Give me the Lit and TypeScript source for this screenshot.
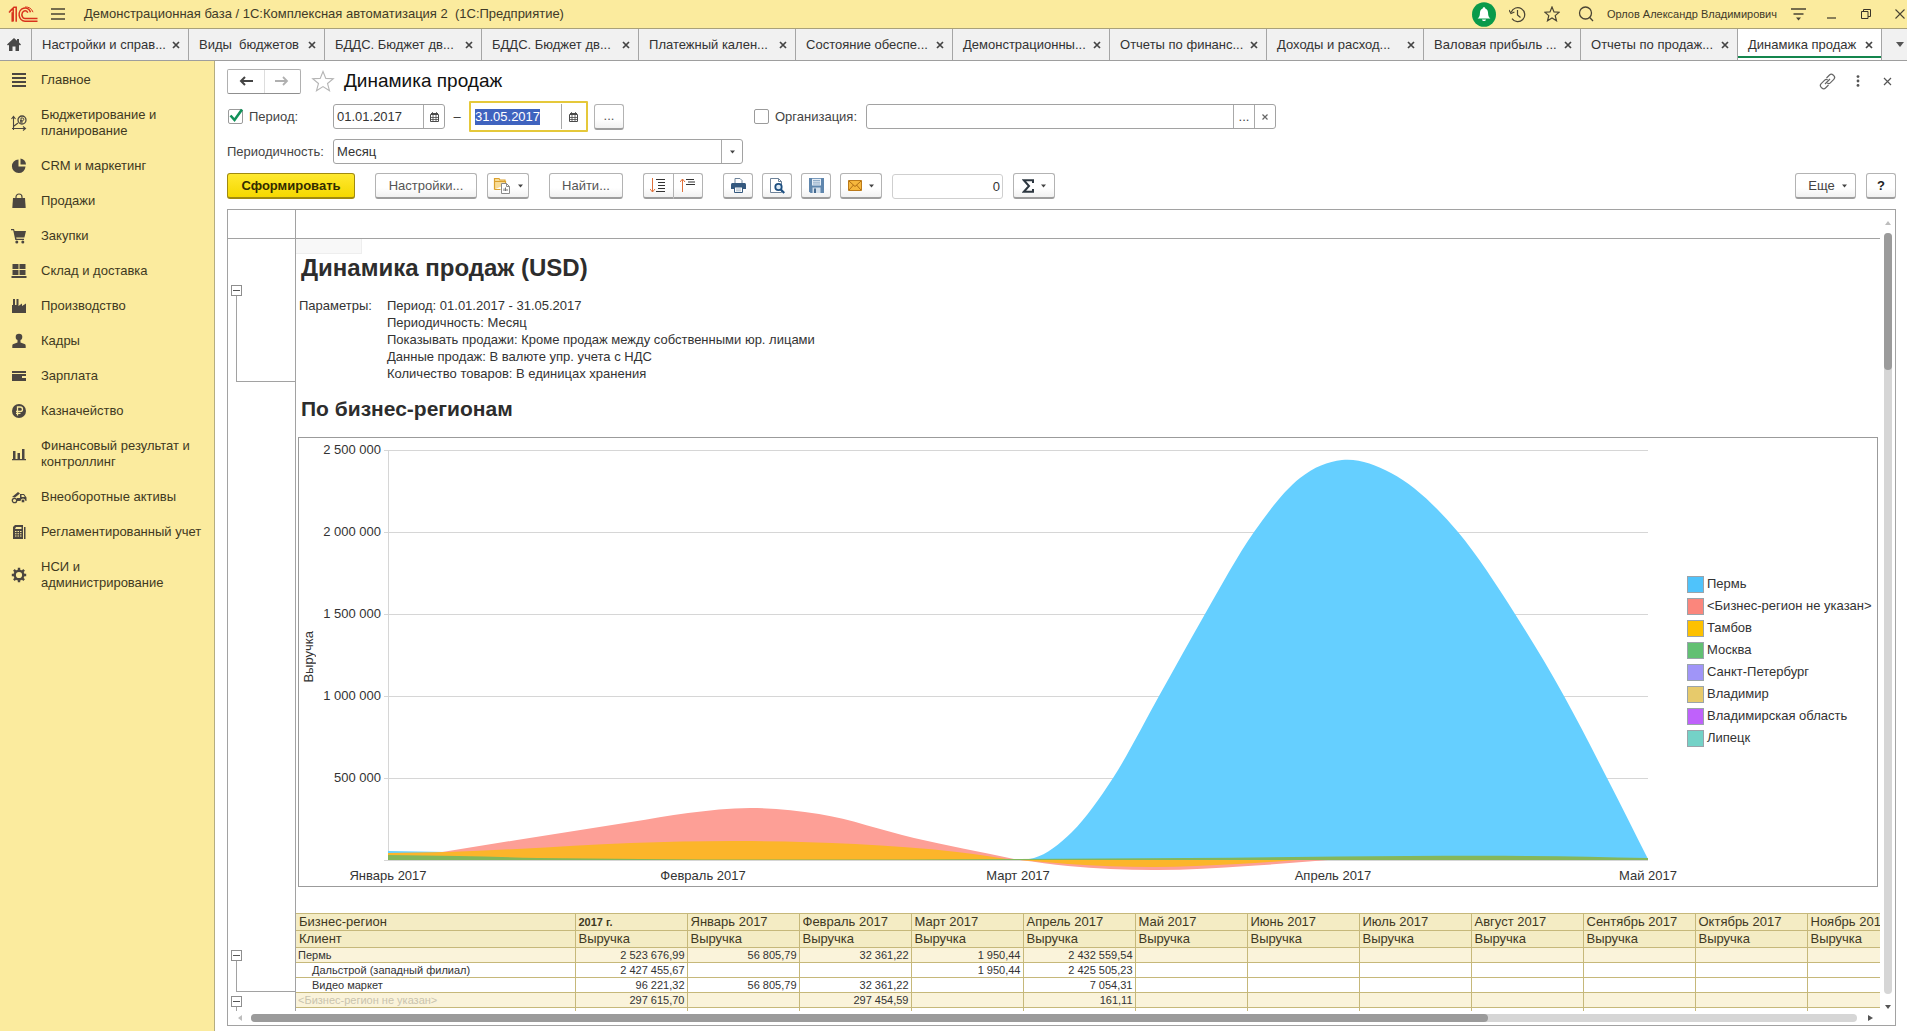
import { LitElement, html, css, svg, nothing, type TemplateResult } from "lit";
import { customElement, query, state } from "lit/decorators.js";
import { classMap } from "lit/directives/class-map.js";

const icons: Record<string, TemplateResult> = {
  logo: html`<svg width="30" height="17" viewBox="0 0 30 17" fill="none" stroke="#d8321c" stroke-width="1.5">
    <path d="M1 6.5 5.2 2.2v13.3M4.2 6.2v9.6M8.2 15.8V1.2H6L2 5" />
    <path d="M22.5 6.2A5.9 6.6 0 1 0 17 15.2H29.5" />
    <path d="M19.8 6.6A3.2 3.9 0 1 0 17 12.6H29.5" />
    <path d="M25 6.2A8 8 0 0 0 17 1" stroke-width="1" />
  </svg>`,
  burger: html`<svg width="14" height="14" viewBox="0 0 14 14" stroke="#4a4433" stroke-width="1.4"><path d="M0 2h14M0 7h14M0 12h14" /></svg>`,
  bell: html`<svg width="24" height="25" viewBox="0 0 24 25"><ellipse cx="12" cy="12.5" rx="12" ry="12.3" fill="#0a9a4a" /><path d="M12 5.2c.9 0 1.2.6 1.3 1.2 2 .7 2.7 2.500 2.800 5 .1 2.400.5 3.500 2.300 5H5.600c1.800-1.500 2.200-2.600 2.300-5 .1-2.500.8-4.300 2.800-5 .1-.6.400-1.200 1.300-1.200zM10 17.400h4c-.2 1-1 1.600-2 1.600s-1.800-.6-2-1.600z" fill="#fff" /></svg>`,
  history: html`<svg width="17" height="17" viewBox="0 0 17 17" fill="none" stroke="#4a4433" stroke-width="1.2"><path d="M2.200 6.200A7 7 0 1 1 3 12.700" /><path d="M8.500 4v5l3 2.500" /><path d="M0 4l2 3.500L5.400 6" /></svg>`,
  star: html`<svg width="16" height="16" viewBox="0 0 16 16" fill="none" stroke="#4a4433" stroke-width="1.2"><path d="M8 1l2 4.900 5.200.3-4 3.400 1.300 5.200L8 12l-4.500 2.800 1.300-5.200-4-3.400 5.200-.3z" /></svg>`,
  starBig: html`<svg width="24" height="22" viewBox="0 0 24 22" fill="none" stroke="#b5b5b5" stroke-width="1.100"><path d="M12 1.500l2.800 6.900 7.500.4-5.800 4.700 2 7.200L12 16.600l-6.500 4.100 2-7.200-5.800-4.700 7.500-.4z" /></svg>`,
  search: html`<svg width="16" height="16" viewBox="0 0 16 16" fill="none" stroke="#4a4433" stroke-width="1.300"><circle cx="7.500" cy="7" r="6" /><path d="M11.500 11.300l3.500 3.700" /></svg>`,
  settings: html`<svg width="15" height="14" viewBox="0 0 15 14" fill="none" stroke="#4a4433" stroke-width="1.300"><path d="M0 2h15M2.500 7h10" /><path d="M5 10.500h5l-2.500 3z" fill="#4a4433" stroke="none" /></svg>`,
  minimize: html`<svg width="10" height="12" viewBox="0 0 10 12" stroke="#4a4433" stroke-width="1.300"><path d="M0 10h9" /></svg>`,
  restore: html`<svg width="10" height="10" viewBox="0 0 10 10" fill="none" stroke="#3a3529"><path d="M.500 2.500h6.500v7H.500zM2.500 2.500v-2h7v7H7" /></svg>`,
  closeThin: html`<svg width="10" height="10" viewBox="0 0 10 10" stroke="#4a4433" stroke-width="1.100"><path d="M.500.500l9 9M9.500.500l-9 9" /></svg>`,
  closeForm: html`<svg width="9" height="9" viewBox="0 0 9 9" stroke="#555" stroke-width="1.200"><path d="M1 1l7 7M8 1L1 8" /></svg>`,
  closeTab: html`<svg width="8" height="8" viewBox="0 0 8 8" stroke="#444" stroke-width="1.700"><path d="M1 1l6 6M7 1L1 7" /></svg>`,
  clear: html`<svg width="6" height="6" viewBox="0 0 6 6" stroke="#666" stroke-width="1.200"><path d="M.500.500l5 5M5.500.500l-5 5" /></svg>`,
  home: html`<svg width="14" height="13" viewBox="0 0 14 13" fill="#484848"><path d="M7 0l3 2.700V1h2v3.600L14 6.500l-1 1-1-.8V13H8.500V8.500h-3V13H2V6.700l-1 .8-1-1z" /></svg>`,
  caret: html`<svg width="5" height="4" viewBox="0 0 5 4" fill="#444"><path d="M0 .500h5L2.500 3.500z" /></svg>`,
  caretBig: html`<svg width="8" height="5" viewBox="0 0 8 5" fill="#555"><path d="M0 0h8L4 5z" /></svg>`,
  back: html`<svg width="14" height="10" viewBox="0 0 14 10" fill="none" stroke="#444" stroke-width="2"><path d="M14 5H2M6 1L2 5l4 4" /></svg>`,
  forward: html`<svg width="14" height="10" viewBox="0 0 14 10" fill="none" stroke="#b0b0b0" stroke-width="1.800"><path d="M0 5h12M8 1l4 4-4 4" /></svg>`,
  link: html`<svg width="17" height="17" viewBox="0 0 17 17" fill="none" stroke="#666" stroke-width="1.200"><path d="M7.500 5l3-3c1-1 2.600-1 3.600 0l.7.700c1 1 1 2.600 0 3.600l-3.500 3.500c-.8.800-2 .9-3 .3M9.500 12l-3 3c-1 1-2.600 1-3.600 0l-.7-.7c-1-1-1-2.600 0-3.600l3.500-3.500c.8-.8 2-.9 3-.3" /><path d="M6 11l5-5" /></svg>`,
  dots: html`<svg width="4" height="12" viewBox="0 0 4 12" fill="#555"><circle cx="2" cy="1.600" r="1.400" /><circle cx="2" cy="6" r="1.400" /><circle cx="2" cy="10.400" r="1.400" /></svg>`,
  calendar: html`<svg width="9" height="10" viewBox="0 0 9 10" fill="none" stroke="#4a4a4a"><path d="M.500 2.500h8v7h-8z" /><path d="M1 2h7" stroke-width="2" /><path d="M2.500 0v2M6.500 0v2M3 3v7M6 3v7M1 5.500h7M1 7.500h7" stroke-width=".8" /></svg>`,
  variants: html`<svg width="18" height="18" viewBox="0 0 18 18" fill="none"><path d="M1.500 4.500V1.500H6l1 1.500h5v2M1.500 12.500v-8h11v3M1.500 12.500h6" fill="#f8dc97" stroke="#dba12e" stroke-width="1.200" /><path d="M8.500 6.500h5l3 3v7h-8z" fill="#fff" stroke="#8b8b8b" /><path d="M13.500 6.500v3h3" stroke="#8b8b8b" /><path d="M11 14v-2.500M12.500 14v-3.500M14 14v-2" stroke="#777" /></svg>`,
  expand: html`<svg width="17" height="15" viewBox="0 0 17 15" fill="none"><path d="M2.500 0v14M0 11l2.500 3L5 11" stroke="#e0703a" stroke-width="1" /><path d="M6 1.500h9M8 4.500h7M8 7.500h7M8 10.500h7M6 13.500h9" stroke="#333" stroke-width="1.200" /></svg>`,
  collapse: html`<svg width="17" height="15" viewBox="0 0 17 15" fill="none"><path d="M2.500 14V1M0 4l2.500-3L5 4" stroke="#e0703a" stroke-width="1" /><path d="M6 1.500h8M8 4h7M6 6.500h9" stroke="#333" stroke-width="1.200" /></svg>`,
  print: html`<svg width="15" height="15" viewBox="0 0 15 15"><path d="M4 6V.500h5L11 2.500V6" fill="#fff" stroke="#6d8299" /><path d="M1.500 5h12c.8 0 1.500.700 1.500 1.500V11H0V6.500C0 5.700.700 5 1.500 5z" fill="#35597f" /><path d="M3.500 9h8v5.500h-8z" fill="#fff" stroke="#35597f" /><path d="M5 11h5M5 12.800h5" stroke="#8ea3b8" stroke-width=".8" /></svg>`,
  preview: html`<svg width="15" height="16" viewBox="0 0 15 16" fill="none"><path d="M.500.500h8l3 3v11H.500z" fill="#fff" stroke="#6d8299" /><path d="M8.500.500v3h3" stroke="#6d8299" /><circle cx="8.500" cy="9" r="3.200" fill="#dbe9f5" stroke="#1d4f80" stroke-width="1.800" /><path d="M10.800 11.400l3.400 3.600" stroke="#1d4f80" stroke-width="2.200" /></svg>`,
  save: html`<svg width="15" height="15" viewBox="0 0 15 15"><path d="M0 0h15v15H1.500L0 13.500z" fill="#5f86ad" /><path d="M3 .8h9v6.700H3z" fill="#e6eef6" /><path d="M4 2.500h7M4 4.200h7M4 6h7" stroke="#7a9abb" stroke-width=".8" /><path d="M3.500 9.500h8V15h-8z" fill="#d3dfeb" /><path d="M5 10.500h2V15H5z" fill="#456a90" /></svg>`,
  mail: html`<svg width="14" height="11" viewBox="0 0 14 11"><path d="M.500.500h13v10H.500z" fill="#f6b73c" stroke="#bb7a1a" /><path d="M1 1l6 5.500L13 1M1 10l4.500-5M13 10L8.500 5" fill="none" stroke="#a5630f" stroke-width=".9" /></svg>`,
  sigma: html`<svg width="12" height="14" viewBox="0 0 12 14" fill="none" stroke="#2d3740" stroke-width="2"><path d="M11 4V1.200H1.800L7 7l-5.200 5.800H11V10" /></svg>`,
};

const navIcon = (body: TemplateResult) =>
  html`<svg class="nav-icon" width="16" height="16" viewBox="0 0 16 16" fill="#4b4640">${body}</svg>`;

const sections: { label: string; icon: TemplateResult }[] = [
  { label: "Главное", icon: svg`<path d="M1 1h14v2H1zM1 5h14v2H1zM1 9h14v2H1zM1 13h14v2H1z"/>` },
  {
    label: "Бюджетирование и\nпланирование",
    icon: svg`<path d="M2.500 15V2M.500 4l2-2.500L4.500 4M1 13.500h13M12 11.500l2.500 2-2.500 2M3 11l4-3" fill="none" stroke="#4b4640" stroke-width="1.100"/><circle cx="11" cy="5" r="4" fill="none" stroke="#4b4640" stroke-width="1.300"/><path d="M10 8V3h1.500a1.300 1.300 0 0 1 0 2.600H9M9 6.900h3" fill="none" stroke="#4b4640" stroke-width="1"/>`,
  },
  { label: "CRM и маркетинг", icon: svg`<path d="M7.500 1.500v7h7A6.800 6.800 0 1 1 7.500 1.500z"/><path d="M9.500.500A6.500 6.500 0 0 1 15 6.500H9.500z"/>` },
  { label: "Продажи", icon: svg`<path d="M2 5h12l.700 10H1.300z"/><path d="M5 7V4a3 3 0 0 1 6 0v3" fill="none" stroke="#4b4640" stroke-width="1.200"/>` },
  { label: "Закупки", icon: svg`<path d="M0 1h3l.600 2H15l-1.600 6.500H5.200l.3 1.300H13v1.200H4.300L2.200 2.300H0z"/><circle cx="5.800" cy="14" r="1.500"/><circle cx="11.800" cy="14" r="1.500"/>` },
  { label: "Склад и доставка", icon: svg`<path d="M1.500 1h6v5h-6zM8.500 1h6v5h-6zM1.500 7h6v5h-6zM8.500 7h6v5h-6zM.500 13h15v2H.500z"/>` },
  { label: "Производство", icon: svg`<path d="M1 15V7h1V1h2v6h1.500V1h2v7L11 5.500V8l4-2.500V15z"/>` },
  { label: "Кадры", icon: svg`<circle cx="8" cy="4" r="3.300"/><path d="M6.500 7h3v2.500l4 1.500c1 .4 1.200 1.200 1.200 2.200V15H1.300v-1.800c0-1 .2-1.800 1.200-2.200l4-1.500z"/>` },
  { label: "Зарплата", icon: svg`<path d="M1 3h14v2H1zM1 6h14v2h-4v2h4v3H1z"/>` },
  { label: "Казначейство", icon: svg`<circle cx="8" cy="8" r="7"/><path d="M6.500 12.500V4h2.800a2.200 2.200 0 0 1 0 4.400H5M5 10.400h4.500" fill="none" stroke="#fbeb9e" stroke-width="1.300"/>` },
  { label: "Финансовый результат и\nконтроллинг", icon: svg`<path d="M2 5h2.500v8H2zM6.500 7H9v6H6.500zM11 3h2.500v10H11zM1 13h14v1.200H1z"/>` },
  { label: "Внеоборотные активы", icon: svg`<path d="M1 8l6-5 2 1.500L4 8.500zM9 5h4l2.500 3.500V12H6V9h3z"/><circle cx="3.500" cy="11.500" r="2.200" fill="none" stroke="#4b4640" stroke-width="1.300"/><circle cx="12" cy="12" r="2" stroke="#fbeb9e"/><path d="M10.500 6h2l1.300 2h-3.300z" fill="#fbeb9e"/>` },
  { label: "Регламентированный учет", icon: svg`<path d="M2 3l2-2h8v14H2zM13 3h1.500v12H13z"/><path d="M5 3h5.500v2H4z" fill="#fbeb9e"/><path d="M4 7.500h7M4 9.800h7M4 12h7" stroke="#fbeb9e" stroke-width="1.100" stroke-dasharray="1.500 1"/>` },
  { label: "НСИ и\nадминистрирование", icon: svg`<circle cx="8" cy="8" r="4.300" fill="none" stroke="#4b4640" stroke-width="2.400"/><path d="M8 .800v3M8 12.200v3M.800 8h3M12.200 8h3M2.900 2.900L5 5M11 11l2.100 2.100M2.900 13.100L5 11M11 5l2.100-2.100" stroke="#4b4640" stroke-width="2.400"/>` },
];

const tabs = [
  "Настройки и справ...",
  "Виды  бюджетов",
  "БДДС. Бюджет дв...",
  "БДДС. Бюджет дв...",
  "Платежный кален...",
  "Состояние обеспе...",
  "Демонстрационны...",
  "Отчеты по финанс...",
  "Доходы и расход...",
  "Валовая прибыль ...",
  "Отчеты по продаж...",
  "Динамика продаж",
];
const compactTabs = new Set(["Виды  бюджетов", "Динамика продаж"]);

const legend = [
  ["Пермь", "perm"],
  ["<Бизнес-регион не указан>", "none"],
  ["Тамбов", "tambov"],
  ["Москва", "moscow"],
  ["Санкт-Петербург", "spb"],
  ["Владимир", "vladimir"],
  ["Владимирская область", "vladobl"],
  ["Липецк", "lipetsk"],
];

const months = ["Январь 2017", "Февраль 2017", "Март 2017", "Апрель 2017", "Май 2017", "Июнь 2017", "Июль 2017", "Август 2017", "Сентябрь 2017", "Октябрь 2017", "Ноябрь 2017"];

type Row = { name: string; kind: "group" | "child" | "muted"; values: string[] };
const rows: Row[] = [
  { name: "Пермь", kind: "group", values: ["2 523 676,99", "56 805,79", "32 361,22", "1 950,44", "2 432 559,54"] },
  { name: "Дальстрой (западный филиал)", kind: "child", values: ["2 427 455,67", "", "", "1 950,44", "2 425 505,23"] },
  { name: "Видео маркет", kind: "child", values: ["96 221,32", "56 805,79", "32 361,22", "", "7 054,31"] },
  { name: "<Бизнес-регион не указан>", kind: "muted", values: ["297 615,70", "", "297 454,59", "", "161,11"] },
  { name: "", kind: "child", values: [] },
];

type Point = [number, number];

/* Smooth curve y(x) through all points: cubic Hermite segments with
   distance-weighted slopes, written as Bezier commands. */
function curve(points: Point[]): string {
  const n = points.length;
  const steps = points.slice(1).map((p, i) => ({ h: p[0] - points[i][0], s: (p[1] - points[i][1]) / (p[0] - points[i][0]) }));
  const slope = (i: number) => {
    if (i === 0) return steps[0].s;
    if (i === n - 1) return steps[n - 2].s;
    const a = steps[i - 1];
    const b = steps[i];
    return (a.s * b.h + b.s * a.h) / (a.h + b.h);
  };
  let d = `M${points[0][0]} ${points[0][1]}`;
  for (let i = 0; i < n - 1; i++) {
    const [x1, y1] = points[i];
    const [x2, y2] = points[i + 1];
    const t = (x2 - x1) / 3;
    const c = [x1 + t, y1 + slope(i) * t, x2 - t, y2 - slope(i + 1) * t, x2, y2].map((v) => v.toFixed(1));
    d += `C${c.join(" ")}`;
  }
  return d;
}
const area = (points: Point[]) => `${curve(points)}L${points[points.length - 1][0]} 410L${points[0][0]} 410Z`;

const series: { cls: string; points: Point[] }[] = [
  { cls: "perm", points: [[0, 401], [60, 402], [160, 404], [320, 406], [630, 410]] },
  { cls: "perm", points: [[632, 410], [646, 408], [684, 382], [725, 328], [771, 246], [817, 164], [866, 82], [912, 28], [954, 10], [1003, 23], [1070, 82], [1127, 164], [1176, 246], [1219, 328], [1260, 409]] },
  { cls: "none", points: [[42, 404], [129, 390], [243, 372], [300, 363], [362, 358], [431, 364], [526, 388], [626, 409]] },
  { cls: "tambov", points: [[0, 403], [60, 402], [129, 399], [243, 393], [350, 391], [467, 394], [569, 402], [626, 410]] },
  { cls: "none", points: [[632, 410], [680, 416], [765, 420], [860, 416], [940, 410]] },
  { cls: "tambov", points: [[632, 410], [680, 414], [765, 417], [850, 414], [910, 410]] },
  { cls: "moscow", points: [[0, 405], [70, 406], [150, 408], [252, 409], [630, 409], [800, 408], [1020, 406], [1140, 406], [1260, 408]] },
];

const base = css`
  * { box-sizing: border-box; }
  button, input, select { font: inherit; color: inherit; margin: 0; padding: 0; background: none; border: 0; border-radius: 0; min-width: 0; outline: none; }
  button { display: inline-flex; align-items: center; justify-content: center; cursor: pointer; }
  svg { display: block; flex: none; }
  h1, h2, h3, p, ul, dl, dt, dd { margin: 0; padding: 0; }
`;

@customElement("report-chart")
export class ReportChart extends LitElement {
  static styles = [base, css`
    :host { display: block; }
    .chart { display: grid; grid-template-columns: 20px 62px 1fr 190px; border: 1px solid #9b9b9b; padding-top: 12px; font-size: 13px; line-height: 16px; color: #333; }
    .axis-name { align-self: center; justify-self: center; writing-mode: vertical-rl; transform: rotate(180deg); margin-bottom: 22px; }
    .scale { display: flex; flex-direction: column; justify-content: space-between; text-align: right; height: 410px; }
    .scale span { height: 0; display: flex; align-items: center; justify-content: flex-end; white-space: nowrap; }
    .plot { margin: 0 39px 0 7px; min-width: 0; }
    .canvas { width: 100%; height: 410px; overflow: visible; }
    .months { display: flex; justify-content: space-between; margin-top: 8px; height: 18px; }
    .months span { width: 0; display: flex; justify-content: center; white-space: nowrap; }
    .legend { list-style: none; align-self: center; margin-bottom: 14px; }
    .legend li { display: flex; align-items: center; gap: 3px; height: 22px; white-space: nowrap; }
    .swatch { width: 17px; height: 17px; border: 1px solid #9aa4aa; flex: none; }
    .grid { stroke: #d6d6d6; vector-effect: non-scaling-stroke; shape-rendering: crispEdges; }
    .perm { background: #4fc3fb; fill: #65cfff; }
    .none { background: #fb867c; fill: #fd9f96; }
    .tambov { background: #fdc100; fill: #fcb52a; }
    .moscow { background: #62c073; fill: #84b75c; }
    .spb { background: #a095f8; }
    .vladimir { background: #e7ca6b; }
    .vladobl { background: #bf61fb; }
    .lipetsk { background: #74d2c7; }
  `];

  render() {
    return html`
      <div class="chart">
        <span class="axis-name">Выручка</span>
        <div class="scale">
          ${["2 500 000", "2 000 000", "1 500 000", "1 000 000", "500 000", ""].map((t) => html`<span>${t}</span>`)}
        </div>
        <div class="plot">
          <svg class="canvas" viewBox="0 0 1260 410" preserveAspectRatio="none">
            ${[0, 82, 164, 246, 328, 410].map((y) => svg`<path class="grid" d="M-4 ${y}H1260"/>`)}
            <path class="grid" d="M0 0V410" />
            ${series.map((s) => svg`<path class=${s.cls} d=${area(s.points)}/>`)}
          </svg>
          <div class="months">${months.slice(0, 5).map((m) => html`<span>${m}</span>`)}</div>
        </div>
        <ul class="legend">
          ${legend.map(([name, cls]) => html`<li><span class="swatch ${cls}"></span>${name}</li>`)}
        </ul>
      </div>
    `;
  }
}

@customElement("report-sheet")
export class ReportSheet extends LitElement {
  static styles = [base, css`
    :host { display: flex; flex-direction: column; border: 1px solid #a2a2a2; background: #fff; min-height: 0; overflow: hidden; }
    .upper { flex: 1; display: flex; min-height: 0; }
    .sheet { flex: 1; min-width: 0; overflow: hidden; display: flex; flex-direction: column; }
    .ruler { flex: none; height: 29px; display: flex; border-bottom: 1px solid #a2a2a2; }
    .band { display: flex; flex: none; }
    .gutter { flex: none; width: 68px; border-right: 1px solid #a2a2a2; display: flex; flex-direction: column; }
    .cells { flex: 1; min-width: 0; overflow: hidden; }
    .gutter.params { padding-top: 46px; }
    .gutter.rows { padding-top: 37px; }
    .toggle { flex: none; width: 11px; height: 11px; margin-left: 3px; border: 1px solid #8e8e8e; background: #fff; }
    .toggle svg { stroke: #555; }
    .bracket { margin-left: 8px; border-left: 1px solid #a2a2a2; border-bottom: 1px solid #a2a2a2; }
    .bracket.long { flex: 1; }
    .bracket.group { height: 31px; margin-bottom: 4px; }
    .active-cell { width: 66px; height: 15px; background: #f8f8f8; border-right: 1px solid #eee; border-bottom: 1px solid #eee; }
    h2 { font-size: 24px; line-height: 28px; padding-left: 5px; color: #2d2d2d; }
    h3 { font-size: 21px; line-height: 24px; padding: 15px 5px 16px; color: #2d2d2d; }
    .parameters { display: flex; gap: 17px; margin-top: 15px; padding-left: 3px; font-size: 13px; line-height: 17px; color: #333; }
    .parameters dt { width: 71px; }
    report-chart { margin: 0 2px 26px 2px; }
    table { border-collapse: collapse; table-layout: fixed; width: 1511px; font-size: 11px; color: #333; }
    .name-col { width: 279px; }
    .value-col { width: 112px; }
    th, td { border: 1px solid #c6b87a; border-left-width: 0; padding: 0 2px; height: 15px; line-height: 14px; white-space: nowrap; font-weight: normal; }
    th { background: #f4ecc4; text-align: left; font-size: 13px; height: 17px; line-height: 16px; padding: 0 3px; color: #40391f; }
    thead th.total { font-weight: bold; font-size: 11px; }
    td { text-align: right; }
    tbody th { background: none; font-size: 11px; height: 15px; line-height: 14px; padding: 0 2px; color: #333; }
    tbody .child th { padding-left: 16px; }
    tbody .group, tbody .muted { background: #faf3da; }
    tbody .muted th { color: #c9c3ae; }
    .vbar { flex: none; width: 15px; display: flex; flex-direction: column; align-items: center; padding-top: 9px; }
    .arrow { width: 12px; height: 8px; }
    .arrow svg { fill: #555; }
    .arrow.off svg { fill: #bdbdbd; }
    .vtrack { flex: 1; width: 8px; margin: 6px 0 9px; border-radius: 4px; background: #d6d6d6; }
    .vthumb { width: 8px; height: 18%; border-radius: 4px; background: #9b9b9b; }
    .hbar { flex: none; height: 14px; display: flex; align-items: center; padding: 0 19px 0 6px; }
    .htrack { flex: 1; height: 8px; margin: 0 7px 0 5px; border-radius: 4px; background: #d6d6d6; }
    .hthumb { width: 77%; height: 8px; border-radius: 4px; background: #9b9b9b; }
  `];

  private toggle() {
    return html`<button class="toggle" aria-label="Свернуть группу"><svg width="7" height="7" viewBox="0 0 7 7"><path d="M0 3.500h7" /></svg></button>`;
  }

  render() {
    return html`
      <div class="upper">
        <div class="sheet">
          <div class="ruler"><div class="gutter"></div></div>
          <section class="band">
            <div class="gutter params">${this.toggle()}<div class="bracket long"></div></div>
            <div class="cells">
              <div class="active-cell"></div>
              <h2>Динамика продаж (USD)</h2>
              <dl class="parameters">
                <dt>Параметры:</dt>
                <div>
                  <dd>Период: 01.01.2017 - 31.05.2017</dd>
                  <dd>Периодичность: Месяц</dd>
                  <dd>Показывать продажи: Кроме продаж между собственными юр. лицами</dd>
                  <dd>Данные продаж: В валюте упр. учета с НДС</dd>
                  <dd>Количество товаров: В единицах хранения</dd>
                </div>
              </dl>
            </div>
          </section>
          <section class="band">
            <div class="gutter"></div>
            <div class="cells">
              <h3>По бизнес-регионам</h3>
              <report-chart></report-chart>
            </div>
          </section>
          <section class="band">
            <div class="gutter rows">
              ${this.toggle()}<div class="bracket group"></div>${this.toggle()}<div class="bracket long"></div>
            </div>
            <div class="cells">
              <table>
                <colgroup><col class="name-col" />${["", ...months].map(() => html`<col class="value-col" />`)}</colgroup>
                <thead>
                  <tr><th>Бизнес-регион</th><th class="total">2017 г.</th>${months.map((m) => html`<th>${m}</th>`)}</tr>
                  <tr><th>Клиент</th>${["", ...months].map(() => html`<th>Выручка</th>`)}</tr>
                </thead>
                <tbody>
                  ${rows.map((r) => html`<tr class=${r.kind}><th scope="row">${r.name}</th>${["", ...months].map((_, i) => html`<td>${r.values[i] ?? nothing}</td>`)}</tr>`)}
                </tbody>
              </table>
            </div>
          </section>
        </div>
        <div class="vbar">
          <button class="arrow off" aria-label="Вверх"><svg width="6" height="4" viewBox="0 0 6 4"><path d="M0 4h6L3 0z" /></svg></button>
          <div class="vtrack"><div class="vthumb"></div></div>
          <button class="arrow" aria-label="Вниз"><svg width="6" height="4" viewBox="0 0 6 4"><path d="M0 0h6L3 4z" /></svg></button>
        </div>
      </div>
      <div class="hbar">
        <button class="arrow off" aria-label="Влево"><svg width="4" height="6" viewBox="0 0 4 6"><path d="M4 0v6L0 3z" /></svg></button>
        <div class="htrack"><div class="hthumb"></div></div>
        <button class="arrow" aria-label="Вправо"><svg width="5" height="6" viewBox="0 0 5 6"><path d="M0 0v6l5-3z" /></svg></button>
      </div>
    `;
  }
}

@customElement("app-root")
export class AppRoot extends LitElement {
  static styles = [base, css`
    :host { display: flex; flex-direction: column; height: 100vh; overflow: hidden; background: #fff; color: #333; font: 13px/16px "Liberation Sans", Arial, sans-serif; }
    .titlebar { flex: none; height: 28px; display: flex; align-items: center; background: #fbeb9e; padding-left: 8px; color: #3f3a28; white-space: pre; }
    .titlebar .menu { margin: 0 19px 0 12px; width: 15px; height: 20px; }
    .app-name { flex: 1; }
    .win { width: 34px; height: 28px; }
    .win.last { width: 24px; justify-content: flex-end; padding-right: 2px; }
    .user { font-size: 11px; margin: 0 4px; }
    .tabs { flex: none; height: 33px; display: flex; background: #f1f1f1; border-top: 1px solid #a9a17a; border-bottom: 1px solid #9e9e9e; }
    .home { width: 31px; padding-right: 3px; flex: none; }
    .tab { display: flex; align-items: stretch; flex: 0 0 157px; min-width: 0; border-left: 1px solid #a5a5a5; padding: 0 8px 0 10px; }
    .tab.compact { flex: 0 0 auto; }
    .tab .caption { flex: 1; justify-content: flex-start; white-space: pre; }
    .tab .close { flex: none; margin-left: 4px; }
    .tab.compact .close { margin-left: 9px; }
    .tab.active { background: #fff; box-shadow: inset 0 -2px 0 #fff, inset 0 -4px 0 #14864e; }
    .more-tabs { flex: 1 0 23px; border-left: 1px solid #a5a5a5; justify-content: flex-end; padding-right: 3px; }
    .body { flex: 1; display: flex; min-height: 0; }
    nav { flex: none; width: 215px; background: #fbeb9e; border-right: 1px solid #b5ad80; padding: 11px 4px 0 11px; display: flex; flex-direction: column; gap: 19px; }
    nav a { display: flex; align-items: center; gap: 14px; color: #40391f; text-decoration: none; }
    .nav-label { white-space: pre-line; }
    .nav-icon { flex: none; }
    main { flex: 1; min-width: 0; display: flex; flex-direction: column; padding: 8px 11px 5px 12px; }
    .form-head { display: flex; align-items: center; height: 24px; }
    .nav-buttons { display: flex; width: 74px; height: 25px; border: 1px solid #b0b0b0; border-bottom-color: #8f8f8f; border-radius: 2px; }
    .nav-buttons button { flex: 1; }
    .nav-buttons button + button { border-left: 1px solid #ddd; }
    .favorite { margin: 0 9px 0 10px; }
    h1 { flex: 1; font-size: 19px; line-height: 22px; font-weight: normal; color: #111; }
    .form-tools { display: flex; align-items: center; gap: 13px; }
    .form-tools button { width: 17px; height: 20px; }
    .filters { display: flex; align-items: center; height: 31px; margin-top: 8px; }
    .caption-cell { flex: none; width: 106px; display: flex; align-items: center; gap: 5px; white-space: nowrap; color: #444; }
    .check { appearance: none; width: 15px; height: 15px; flex: none; border: 1px solid #9b9b9b; border-radius: 2px; background: #fff; }
    .check-wrap { display: grid; width: 17px; height: 18px; flex: none; }
    .check-wrap > * { grid-area: 1 / 1; align-self: center; }
    .check-wrap .check { margin-left: 1px; }
    .check-wrap svg { pointer-events: none; align-self: start; }
    .field { display: flex; height: 25px; border: 1px solid #a2a2a2; border-radius: 3px; background: #fff; }
    .field input, .field select { flex: 1; width: 0; padding-left: 3px; appearance: none; }
    .field .part { flex: none; width: 21px; border-left: 1px solid #a9a9a9; }
    .date { width: 112px; }
    .dash { width: 24px; text-align: center; }
    .date.current { width: 119px; height: 31px; border: 2px solid #e5c83a; border-radius: 1px; padding: 1px; }
    .date.current input::selection { background: #3f63bf; color: #fff; }
    .date.current .part { width: 24px; }
    .choose { margin-left: 6px; width: 30px; height: 26px; }
    .organization { display: flex; align-items: center; gap: 6px; margin-left: 130px; color: #444; }
    .organization .field { width: 410px; margin-left: 3px; }
    .periodicity { display: flex; align-items: center; margin-top: 7px; }
    .periodicity .field { width: 410px; }
    .select-mark { pointer-events: none; display: flex; align-items: center; justify-content: center; }
    .toolbar { display: flex; align-items: center; gap: 10px; margin: 9px 0 10px; }
    .group { display: flex; }
    .actions { display: flex; gap: 9px; }
    .spaced { margin-left: 10px; }
    .btn { flex: none; height: 26px; border: 1px solid #b3b3b3; border-bottom: 2px solid #9d9d9d; border-radius: 3px; background: linear-gradient(#fff 60%, #f1f1f1); color: #555; white-space: nowrap; gap: 7px; }
    .btn.square { width: 30px; }
    .btn.drop { width: 42px; }
    .btn.settings { width: 102px; }
    .btn.find { width: 74px; }
    .btn.more { width: 61px; padding-left: 4px; color: #444; }
    .btn.help { color: #222; font-weight: bold; }
    .btn.primary { width: 128px; border-color: #a08a10; background: linear-gradient(#ffe930, #f5d800); color: #332c00; font-weight: bold; }
    .group .btn:first-child { border-radius: 3px 0 0 3px; border-right-width: 0; }
    .group .btn:last-child { border-radius: 0 3px 3px 0; }
    .total { width: 111px; height: 25px; border: 1px solid #cfcfcf; border-radius: 3px; padding-right: 2px; text-align: right; }
    .push { margin-left: auto; }
    report-sheet { flex: 1; }
  `];

  @state() private active = tabs.length - 1;
  @query("#date-to") private dateTo!: HTMLInputElement;

  firstUpdated() {
    this.dateTo.focus();
    this.dateTo.select();
  }

  private titlebar() {
    return html`
      <header class="titlebar">
        ${icons.logo}
        <button class="menu" aria-label="Меню">${icons.burger}</button>
        <span class="app-name">Демонстрационная база / 1С:Комплексная автоматизация 2  (1С:Предприятие)</span>
        <button class="win" aria-label="Уведомления">${icons.bell}</button>
        <button class="win" aria-label="История">${icons.history}</button>
        <button class="win" aria-label="Избранное">${icons.star}</button>
        <button class="win" aria-label="Поиск">${icons.search}</button>
        <span class="user">Орлов Александр Владимирович</span>
        <button class="win" aria-label="Настройка">${icons.settings}</button>
        <button class="win" aria-label="Свернуть окно">${icons.minimize}</button>
        <button class="win" aria-label="Восстановить окно">${icons.restore}</button>
        <button class="win last" aria-label="Закрыть окно">${icons.closeThin}</button>
      </header>
    `;
  }

  private tabbar() {
    return html`
      <div class="tabs">
        <button class="home" aria-label="Начальная страница">${icons.home}</button>
        ${tabs.map((t, i) => html`
          <div class=${classMap({ tab: true, compact: compactTabs.has(t), active: i === this.active })}>
            <button class="caption" @click=${() => (this.active = i)}>${t}</button>
            <button class="close" aria-label="Закрыть">${icons.closeTab}</button>
          </div>`)}
        <button class="more-tabs" aria-label="Все вкладки">${icons.caretBig}</button>
      </div>
    `;
  }

  private filters() {
    return html`
      <div class="filters">
        <div class="caption-cell">
          <span class="check-wrap">
            <input class="check" type="checkbox" id="period" checked />
            <svg width="17" height="16" viewBox="0 0 17 16" fill="none" stroke="#12915a" stroke-width="2.600"><path d="M3.500 7.500l4 4.500L15 1.500" /></svg>
          </span>
          <label for="period">Период:</label>
        </div>
        <div class="field date">
          <input id="date-from" aria-label="Начало периода" .value=${"01.01.2017"} />
          <button class="part" aria-label="Календарь">${icons.calendar}</button>
        </div>
        <span class="dash">–</span>
        <div class="field date current">
          <input id="date-to" aria-label="Конец периода" .value=${"31.05.2017"} />
          <button class="part" aria-label="Календарь">${icons.calendar}</button>
        </div>
        <button class="btn choose" aria-label="Выбрать период">...</button>
        <div class="organization">
          <input class="check" type="checkbox" id="use-org" />
          <label for="use-org">Организация:</label>
          <div class="field">
            <input aria-label="Организация" />
            <button class="part" aria-label="Выбрать">...</button>
            <button class="part" aria-label="Очистить">${icons.clear}</button>
          </div>
        </div>
      </div>
      <div class="periodicity">
        <label class="caption-cell" for="periodicity">Периодичность:</label>
        <div class="field">
          <select id="periodicity"><option>Месяц</option></select>
          <span class="part select-mark">${icons.caret}</span>
        </div>
      </div>
    `;
  }

  private toolbar() {
    return html`
      <div class="toolbar">
        <button class="btn primary">Сформировать</button>
        <button class="btn settings spaced">Настройки...</button>
        <button class="btn drop" aria-label="Варианты отчета">${icons.variants}${icons.caret}</button>
        <button class="btn find spaced">Найти...</button>
        <div class="group spaced">
          <button class="btn square" aria-label="Развернуть">${icons.expand}</button>
          <button class="btn square" aria-label="Свернуть">${icons.collapse}</button>
        </div>
        <div class="actions spaced">
          <button class="btn square" aria-label="Печать">${icons.print}</button>
          <button class="btn square" aria-label="Просмотр">${icons.preview}</button>
          <button class="btn square" aria-label="Сохранить">${icons.save}</button>
          <button class="btn drop" aria-label="Отправить">${icons.mail}${icons.caret}</button>
        </div>
        <input class="total" aria-label="Сумма" readonly .value=${"0"} />
        <button class="btn drop" aria-label="Итоги">${icons.sigma}${icons.caret}</button>
        <button class="btn more push">Еще ${icons.caret}</button>
        <button class="btn square help">?</button>
      </div>
    `;
  }

  render() {
    return html`
      ${this.titlebar()}${this.tabbar()}
      <div class="body">
        <nav>
          ${sections.map((s) => html`<a href="#">${navIcon(s.icon)}<span class="nav-label">${s.label}</span></a>`)}
        </nav>
        <main>
          <div class="form-head">
            <div class="nav-buttons">
              <button aria-label="Назад">${icons.back}</button>
              <button aria-label="Вперед">${icons.forward}</button>
            </div>
            <button class="favorite" aria-label="В избранное">${icons.starBig}</button>
            <h1>Динамика продаж</h1>
            <div class="form-tools">
              <button aria-label="Ссылка">${icons.link}</button>
              <button aria-label="Еще действия">${icons.dots}</button>
              <button aria-label="Закрыть форму">${icons.closeForm}</button>
            </div>
          </div>
          ${this.filters()}${this.toolbar()}
          <report-sheet></report-sheet>
        </main>
      </div>
    `;
  }
}
